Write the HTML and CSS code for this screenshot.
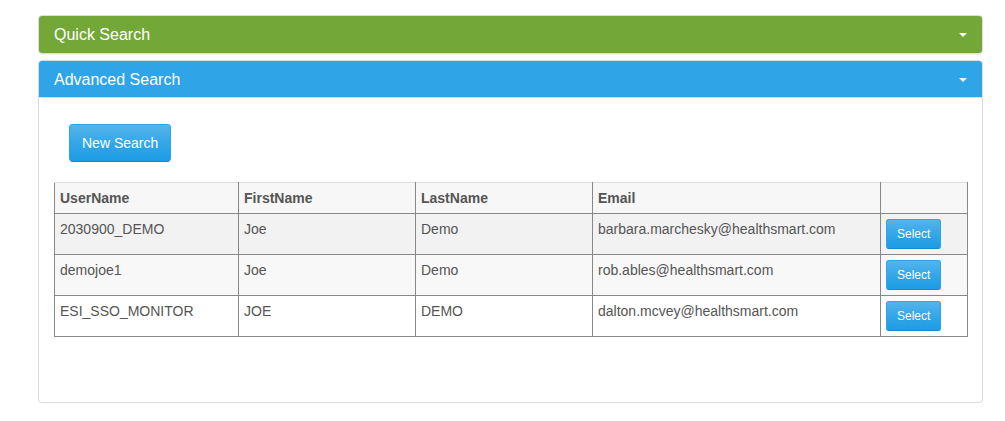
FILE: index.html
```html
<!DOCTYPE html>
<html>
<head>
<meta charset="utf-8">
<link rel="stylesheet" href="styles.css">
</head>
<body>
<div class="container">
  <div class="panel">
    <div class="panel-heading heading-green">
      <span class="panel-title">Quick Search</span>
      <span class="caret"></span>
    </div>
  </div>
  <div class="panel panel-advanced">
    <div class="panel-heading heading-blue">
      <span class="panel-title">Advanced Search</span>
      <span class="caret"></span>
    </div>
    <div class="panel-body">
      <div class="actions">
        <button class="btn btn-primary">New Search</button>
      </div>
      <table class="results">
        <colgroup>
          <col class="c1"><col class="c2"><col class="c3"><col class="c4"><col class="c5">
        </colgroup>
        <thead>
          <tr><th>UserName</th><th>FirstName</th><th>LastName</th><th>Email</th><th></th></tr>
        </thead>
        <tbody>
          <tr class="r1"><td>2030900_DEMO</td><td>Joe</td><td>Demo</td><td>barbara.marchesky@healthsmart.com</td><td><button class="btn btn-sm">Select</button></td></tr>
          <tr class="r2"><td>demojoe1</td><td>Joe</td><td>Demo</td><td>rob.ables@healthsmart.com</td><td><button class="btn btn-sm">Select</button></td></tr>
          <tr class="r3"><td>ESI_SSO_MONITOR</td><td>JOE</td><td>DEMO</td><td>dalton.mcvey@healthsmart.com</td><td><button class="btn btn-sm">Select</button></td></tr>
        </tbody>
      </table>
    </div>
  </div>
</div>
</body>
</html>
```
FILE: styles.css
```css
* { box-sizing: border-box; }
html, body { margin: 0; padding: 0; background: #fff; }
body {
  font-family: "Liberation Sans", Arial, sans-serif;
  font-size: 14px;
  line-height: 20px;
  color: #555;
}
.container {
  width: 945px;
  margin-left: 38px;
  padding-top: 15px;
}
.panel {
  border: 1px solid #dddddd;
  border-radius: 4px;
  background: #fff;
  box-shadow: 0 1px 1px rgba(0,0,0,0.05);
}
.panel-advanced { margin-top: 6px; }
.panel-heading {
  display: flex;
  align-items: center;
  justify-content: space-between;
  padding: 10px 15px;
  color: #fff;
  border-radius: 3px 3px 0 0;
}
.heading-green { background: #73a839; border-radius: 3px; }
.heading-blue { background: #2fa4e7; padding-bottom: 9px; border-bottom: 1px solid #dddddd; }
.panel-title {
  font-size: 16px;
  line-height: 17px;
}
.caret {
  width: 0;
  height: 0;
  border-top: 4px solid #fff;
  border-left: 4px solid transparent;
  border-right: 4px solid transparent;
  margin-top: 1px;
}
.panel-body { padding: 15px; }
.actions { padding: 11px 15px 0; margin-bottom: 20px; }
.btn {
  font-family: "Liberation Sans", Arial, sans-serif;
  color: #fff;
  border: 1px solid #2fa4e7;
  border-bottom-color: #178acc;
  background-image: linear-gradient(#54b4eb, #2fa4e7 60%, #1d9ce5);
  text-shadow: 0 1px 0 rgba(0,0,0,0.05);
  cursor: pointer;
}
.btn-primary {
  font-size: 14px;
  line-height: 20px;
  padding: 8px 12px;
  border-radius: 4px;
}
.btn-sm {
  font-size: 12px;
  line-height: 18px;
  padding: 5px 10px;
  border-radius: 3px;
}
.results {
  width: 913px;
  table-layout: fixed;
  border-collapse: collapse;
  margin-bottom: 50px;
}
.c1 { width: 184px; }
.c2 { width: 177px; }
.c3 { width: 177px; }
.c4 { width: 288px; }
.c5 { width: 87px; }
.results th, .results td {
  border: 1px solid #888;
  padding: 5px;
  text-align: left;
  vertical-align: top;
}
.results th {
  font-weight: bold;
  background: #f7f7f7;
  border-top-color: #dddddd;
}
.r1 td { background: #f2f2f2; }
.r2 td { background: #f8f8f8; }
.r3 td { background: #fff; }
```
